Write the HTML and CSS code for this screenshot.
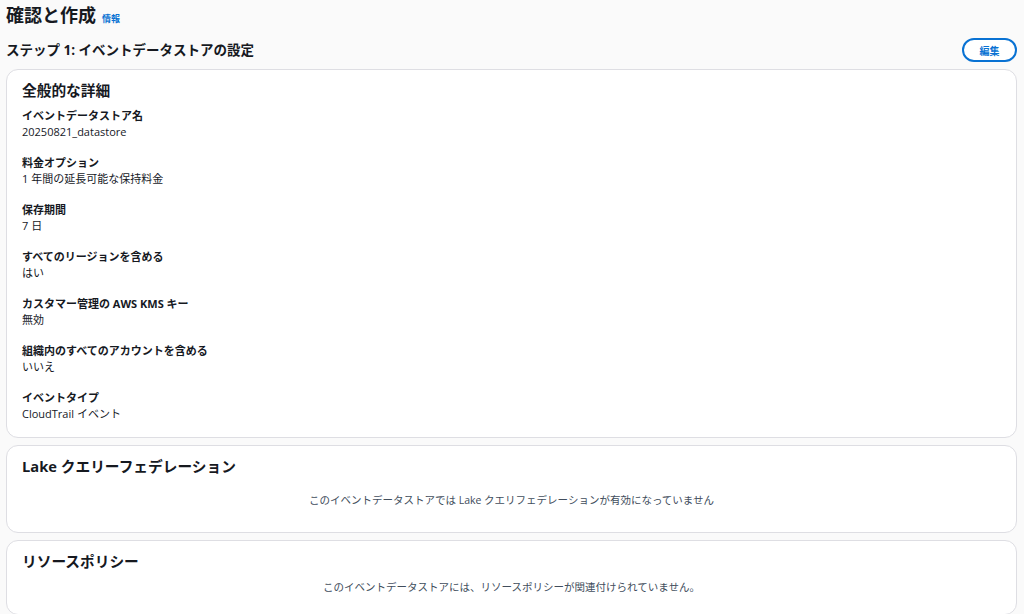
FILE: index.html
```html
<!DOCTYPE html>
<html lang="ja">
<head>
  <meta charset="UTF-8" />
  <meta name="viewport" content="width=device-width, initial-scale=1.0"/>
  <title>確認と作成</title>
  <link rel="stylesheet" href="styles.css">
</head>
<body>

<div class="page">
  <div class="page-header">
    <h1>確認と作成</h1>
    <a class="info" href="#">情報</a>
  </div>

  <div class="step-header">
    <h2>ステップ 1: イベントデータストアの設定</h2>
    <button class="edit-btn">編集</button>
  </div>

  <div class="card">
    <h3>全般的な詳細</h3>
    <dl class="details">
      <div class="item">
        <dt>イベントデータストア名</dt>
        <dd>20250821_datastore</dd>
      </div>
      <div class="item">
        <dt>料金オプション</dt>
        <dd>1 年間の延長可能な保持料金</dd>
      </div>
      <div class="item">
        <dt>保存期間</dt>
        <dd>7 日</dd>
      </div>
      <div class="item">
        <dt>すべてのリージョンを含める</dt>
        <dd>はい</dd>
      </div>
      <div class="item">
        <dt>カスタマー管理の AWS KMS キー</dt>
        <dd>無効</dd>
      </div>
      <div class="item">
        <dt>組織内のすべてのアカウントを含める</dt>
        <dd>いいえ</dd>
      </div>
      <div class="item">
        <dt>イベントタイプ</dt>
        <dd>CloudTrail イベント</dd>
      </div>
    </dl>
  </div>

  <div class="card">
    <h3>Lake クエリーフェデレーション</h3>
    <p class="empty">このイベントデータストアでは Lake クエリフェデレーションが有効になっていません</p>
  </div>

  <div class="card last">
    <h3>リソースポリシー</h3>
    <p class="empty">このイベントデータストアには、リソースポリシーが関連付けられていません。</p>
  </div>
</div>

</body>
</html>
```

FILE: styles.css
```css
body {
  margin: 0;
  background: #fafafa;
  color: #16191f;
  font-family: 'Open Sans', 'Noto Sans CJK JP', sans-serif;
  font-size: 11px;
}

.page {
  padding: 0 7px 0 6px;
}

.page-header {
  display: flex;
  align-items: baseline;
  gap: 6px;
  height: 30px;
  padding-top: 1px;
}

.page-header h1 {
  margin: 0;
  font-size: 18px;
  font-weight: 700;
  line-height: 28px;
}

.info {
  color: #0972d3;
  font-size: 9px;
  font-weight: 700;
  text-decoration: none;
}

.step-header {
  display: flex;
  justify-content: space-between;
  align-items: center;
  height: 38px;
}

.step-header h2 {
  margin: 0;
  font-size: 13.5px;
  font-weight: 700;
  line-height: 18px;
}

.edit-btn {
  font-family: inherit;
  font-size: 10px;
  font-weight: 700;
  color: #0972d3;
  background: #fff;
  border: 2px solid #0972d3;
  border-radius: 14px;
  width: 55px;
  height: 24px;
  padding: 0;
}

.card {
  background: #fff;
  border: 1px solid #dedee3;
  border-radius: 12px;
  margin-bottom: 7px;
  padding: 9px 15px 15px;
}

.card h3 {
  margin: 0;
  font-size: 14.7px;
  font-weight: 700;
  line-height: 22px;
}

.details {
  margin: 7px 0 0;
}

.item {
  margin-bottom: 15px;
}

.item:last-child {
  margin-bottom: 0;
}

.item dt {
  font-weight: 700;
  line-height: 16px;
}

.item dd {
  margin: 0;
  line-height: 16px;
  color: #16191f;
}

.empty {
  margin: 15px 0 9px;
  text-align: center;
  color: #414d5c;
  font-size: 10.5px;
  line-height: 16px;
}

.card.last .empty {
  margin: 7px 0 4px;
}
```
